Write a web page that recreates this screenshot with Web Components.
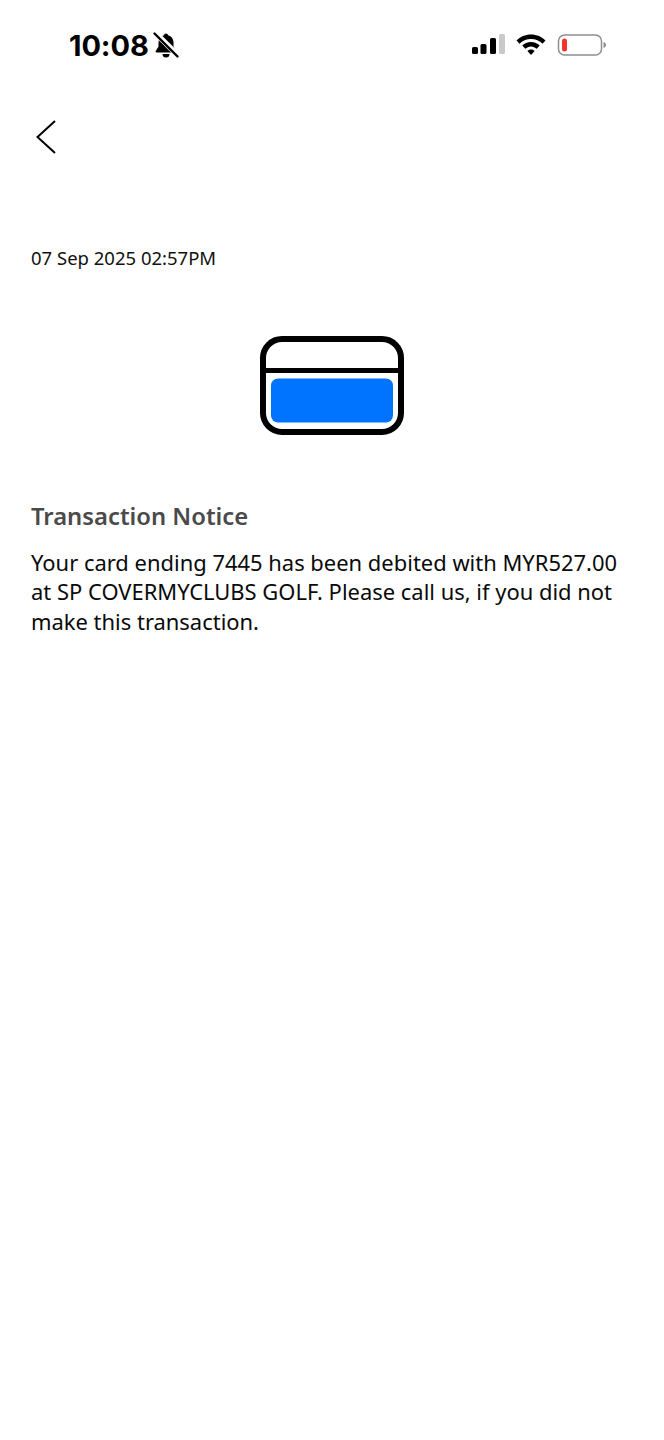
<!DOCTYPE html>
<html>
<head>
<meta charset="utf-8">
<title>Transaction Notice</title>
<style>
  html, body { margin: 0; background: #fff; }
  body { font-family: "Noto Sans", sans-serif; }
</style>
</head>
<body>
<notice-screen>
  <status-bar time="10:08"></status-bar>
  <back-button></back-button>
  <notice-date>07 Sep 2025 02:57PM</notice-date>
  <card-icon></card-icon>
  <notice-body heading="Transaction Notice">Your card ending 7445 has been debited with MYR527.00 at SP COVERMYCLUBS GOLF. Please call us, if you did not make this transaction.</notice-body>
</notice-screen>

<script>
// Page shell
class NoticeScreen extends HTMLElement {
  constructor() {
    super();
    this.attachShadow({ mode: "open" });
    this.shadowRoot.innerHTML = `
      <style>
        :host {
          display: flex;
          flex-direction: column;
          width: 664px;
          height: 1440px;
          background: #fff;
          overflow: hidden;
        }
      </style>
      <slot></slot>
    `;
  }
}

// iOS status bar
class StatusBar extends HTMLElement {
  constructor() {
    super();
    this.attachShadow({ mode: "open" });
  }

  connectedCallback() {
    this.shadowRoot.innerHTML = `
      <style>
        :host {
          display: flex;
          align-items: center;
          height: 90px;
          padding: 0 57px 0 69px;
          box-sizing: border-box;
          color: #000;
        }
        .time {
          margin-top: 2px;
          font: 700 29px/34px Inter, sans-serif;
          letter-spacing: -0.1px;
        }
        .bell { margin-left: 4px; }
        .right {
          margin-left: auto;
          display: flex;
          align-items: center;
          gap: 11px;
        }
        svg { display: block; }
      </style>
      <span class="time">${this.getAttribute("time")}</span>
      <svg class="bell" width="26" height="26" viewBox="0 0 26 26">
        <path d="M13 1.500c1.100 0 1.900.8 2 1.800 3.600.9 5.500 3.800 5.500 7.400v3.900l2.800 4.400c.4.700 0 1.500-.9 1.500H3.600c-.9 0-1.300-.8-.9-1.500l2.800-4.400v-3.900c0-3.600 1.900-6.500 5.500-7.400.1-1 .9-1.800 2-1.800z" fill="#000"/>
        <path d="M9.500 22h7a3.500 3.500 0 0 1-7 0z" fill="#000"/>
        <path d="M3.500 2l21 21" stroke="#fff" stroke-width="5.500"/>
        <path d="M1.500 1.500l23 23" stroke="#000" stroke-width="2.400" stroke-linecap="round"/>
      </svg>
      <div class="right">
        <svg width="34" height="22" viewBox="0 0 34 22">
          <rect x="1" y="13" width="6" height="7" rx="1.500" fill="#000"/>
          <rect x="9.500" y="10" width="6" height="10" rx="1.500" fill="#000"/>
          <rect x="19" y="4" width="6" height="16" rx="1.500" fill="#000"/>
          <rect x="28" y="0" width="6" height="20" rx="1.500" fill="#c9c9c9"/>
        </svg>
        <svg width="30" height="22" viewBox="0 0 30 22">
          <path d="M15 0.500C9.200 0.500 4.200 2.800 .5 6.500l3 3.200C6.300 6.800 10.400 5 15 5s8.700 1.800 11.500 4.700l3-3.200C25.800 2.800 20.800 0.500 15 0.500z" fill="#000"/>
          <path d="M15 8c-3.400 0-6.500 1.400-8.700 3.600l3 3.200c1.500-1.500 3.500-2.400 5.700-2.400s4.200.9 5.700 2.400l3-3.200C21.500 9.400 18.400 8 15 8z" fill="#000"/>
          <path d="M15 15.500c-1.500 0-2.800.6-3.600 1.500l3.600 4 3.600-4c-.8-.9-2.100-1.500-3.600-1.500z" fill="#000"/>
        </svg>
        <svg width="50" height="22" viewBox="0 0 50 22">
          <rect x="1.500" y="1" width="43" height="20" rx="6" fill="#fff" stroke="#8e8e8e" stroke-width="1.500"/>
          <rect x="5" y="4.500" width="5" height="13" rx="2.500" fill="#f5322b"/>
          <path d="M46.500 8v6c1.500-.4 2.500-1.600 2.500-3s-1-2.600-2.500-3z" fill="#8e8e8e"/>
        </svg>
      </div>
    `;
  }
}

// Back chevron
class BackButton extends HTMLElement {
  constructor() {
    super();
    this.attachShadow({ mode: "open" });
    this.shadowRoot.innerHTML = `
      <style>
        :host {
          display: block;
          height: 36px;
          margin: 29px 0 0 36px;
        }
        svg { display: block; }
      </style>
      <svg width="22" height="36" viewBox="0 0 22 36">
        <path d="M19 2L1.500 18 19 34" fill="none" stroke="#000" stroke-width="2"/>
      </svg>
    `;
  }
}

class NoticeDate extends HTMLElement {
  constructor() {
    super();
    this.attachShadow({ mode: "open" });
    this.shadowRoot.innerHTML = `
      <style>
        :host {
          display: block;
          margin: 89px 31px 0;
          font: 400 18.500px/28px "Noto Sans", sans-serif;
          color: #111;
        }
      </style>
      <slot></slot>
    `;
  }
}

// Blue card illustration
class CardIcon extends HTMLElement {
  constructor() {
    super();
    this.attachShadow({ mode: "open" });
    this.shadowRoot.innerHTML = `
      <style>
        :host {
          display: flex;
          justify-content: center;
          margin-top: 64px;
        }
        svg { display: block; }
      </style>
      <svg width="146" height="99" viewBox="0 0 146 99">
        <rect x="4" y="3" width="138" height="93" rx="19" fill="#fff" stroke="#000" stroke-width="6"/>
        <path d="M4 34.500h138" stroke="#000" stroke-width="5"/>
        <rect x="12" y="42.500" width="122" height="44" rx="7" fill="#0073ff"/>
      </svg>
    `;
  }
}

// Heading and message
class NoticeBody extends HTMLElement {
  constructor() {
    super();
    this.attachShadow({ mode: "open" });
  }

  connectedCallback() {
    this.shadowRoot.innerHTML = `
      <style>
        :host {
          display: block;
          margin: 64px 31px 0;
          font-family: "Noto Sans", sans-serif;
        }
        h2 {
          margin: 0 0 15px;
          font-size: 23.800px;
          font-weight: 600;
          line-height: 34px;
          color: #4a4a4a;
        }
        p {
          margin: 0;
          font-size: 21.950px;
          line-height: 29.300px;
          color: #0a0a0a;
        }
      </style>
      <h2>${this.getAttribute("heading")}</h2>
      <p><slot></slot></p>
    `;
  }
}

customElements.define("notice-screen", NoticeScreen);
customElements.define("status-bar", StatusBar);
customElements.define("back-button", BackButton);
customElements.define("notice-date", NoticeDate);
customElements.define("card-icon", CardIcon);
customElements.define("notice-body", NoticeBody);
</script>
</body>
</html>
